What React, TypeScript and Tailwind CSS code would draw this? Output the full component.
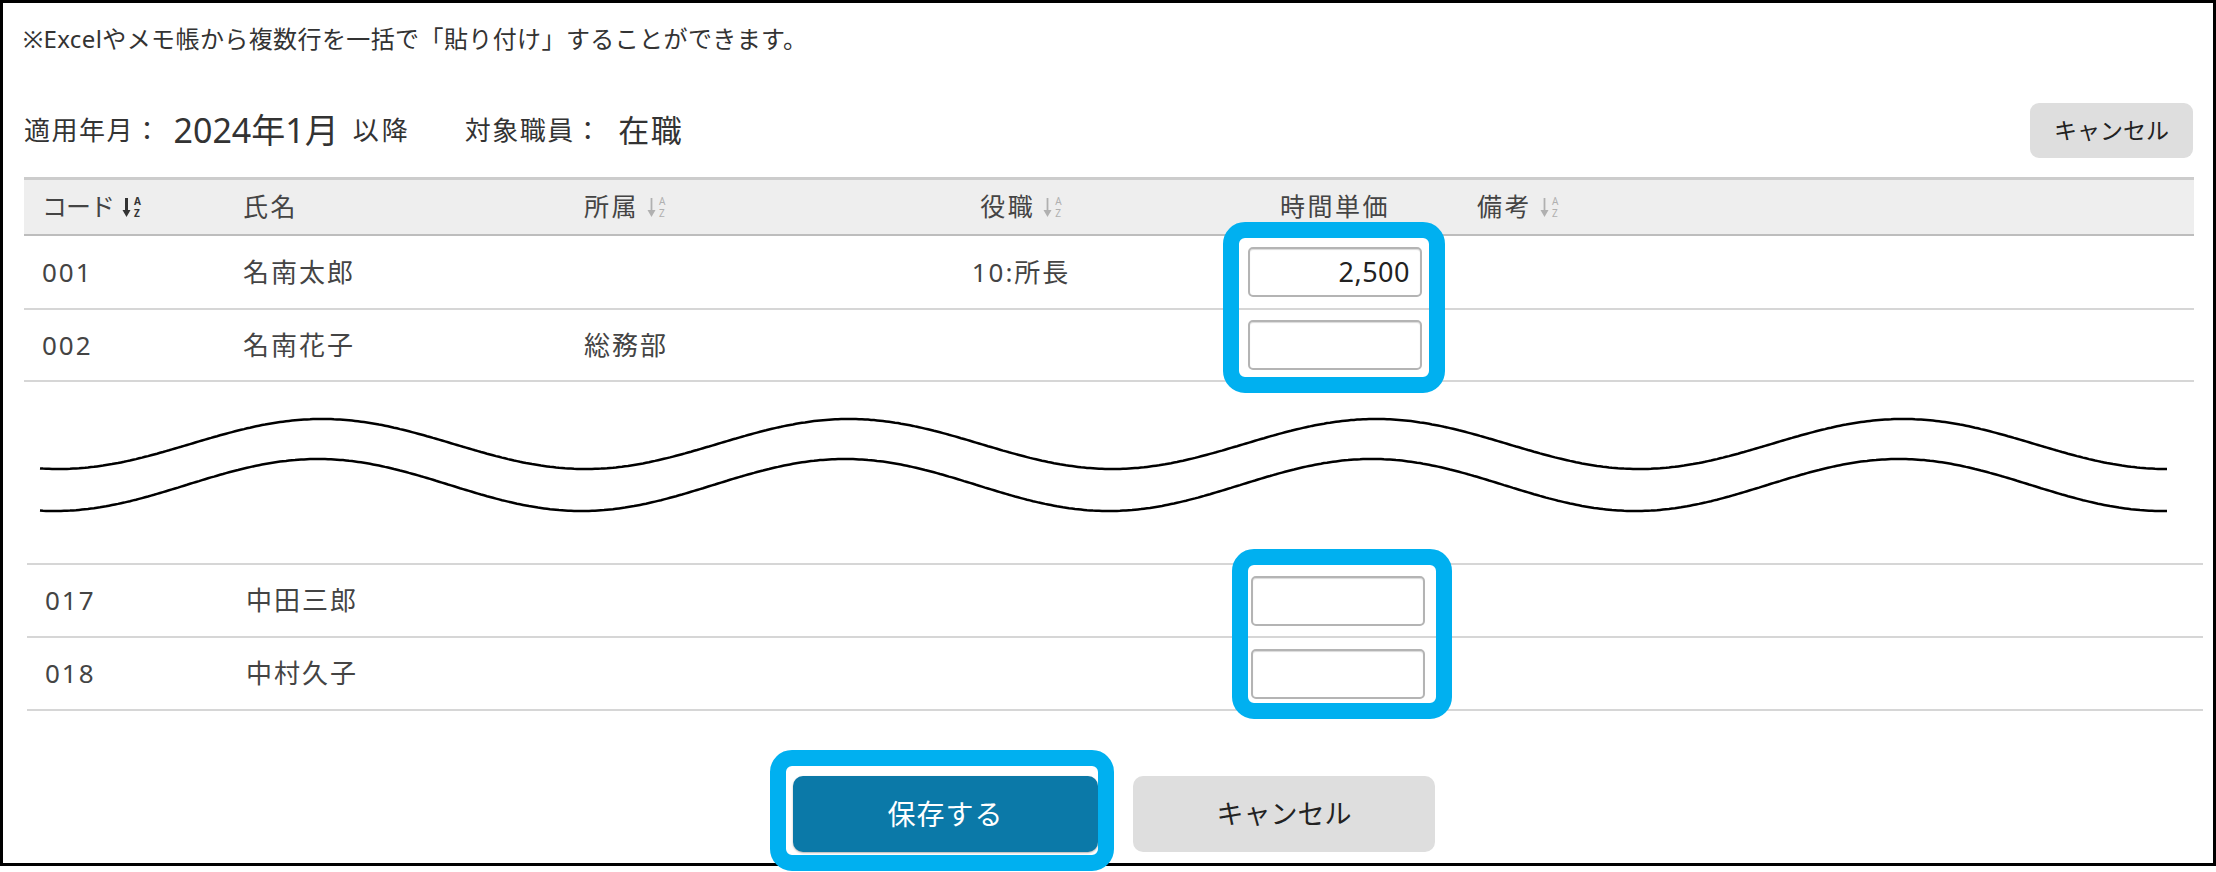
import React from 'react'

const FONT = "font-['Noto_Sans','Noto_Sans_CJK_JP',sans-serif]"

// sine-like break line between the two parts of the table
function wavePath(center: number, amp: number, peakX: number) {
  let d = ''
  for (let x = 40; x <= 2169; x += 3) {
    const y = center - amp * Math.cos((2 * Math.PI * (x - peakX)) / 527)
    d += (x === 40 ? 'M' : 'L') + x + ' ' + y.toFixed(1) + ' '
  }
  return d
}

function SortIcon({ active = false }: { active?: boolean }) {
  const color = active ? 'text-[#333333]' : 'text-[#b0b0b0]'
  return (
    <span className={`ml-[7px] inline-flex items-center tracking-normal ${color}`}>
      <svg width="11" height="24" viewBox="0 0 11 24" className="block">
        <line x1="5.5" y1="3" x2="5.5" y2="18" stroke="currentColor" strokeWidth={active ? 3 : 1.8} />
        <path d="M1.5 15 L5.5 22 L9.5 15 Z" fill="currentColor" />
      </svg>
      <span className={`ml-[2px] flex flex-col text-[10px] leading-[12px] ${active ? 'font-bold' : ''}`}>
        <span>A</span>
        <span>Z</span>
      </span>
    </span>
  )
}

function PriceInput({ value = '' }: { value?: string }) {
  return (
    <div className="flex h-[50px] w-[174px] items-center justify-end rounded-[5px] border-2 border-[#b4b4b4] bg-white pr-[10px] text-[27px] tracking-[0.5px] text-[#222222] shadow-[inset_0_1px_1px_rgba(0,0,0,0.15)]">
      {value}
    </div>
  )
}

interface Row {
  code: string
  name: string
  dept: string
  post: string
  price?: string
}

const topRows: Row[] = [
  { code: '001', name: '名南太郎', dept: '', post: '10:所長', price: '2,500' },
  { code: '002', name: '名南花子', dept: '総務部', post: '' },
]

const bottomRows: Row[] = [
  { code: '017', name: '中田三郎', dept: '', post: '' },
  { code: '018', name: '中村久子', dept: '', post: '' },
]

function TableRow({ row, height }: { row: Row; height: string }) {
  return (
    <div className={`flex items-center border-b-2 border-[#d6d6d6] text-[26px] tracking-[2px] text-[#444444] ${height}`}>
      <div className="w-[201px] pl-[18px]">{row.code}</div>
      <div className="w-[341px] pl-[18px]">{row.name}</div>
      <div className="w-[265px] pl-[18px]">{row.dept}</div>
      <div className="flex w-[380px] justify-center">{row.post}</div>
      <div className="flex w-[248px] justify-center">
        <PriceInput value={row.price} />
      </div>
      <div className="flex-1" />
    </div>
  )
}

export default function App() {
  return (
    <div className={`relative h-[872px] w-[2216px] bg-white ${FONT}`}>
      <div className="h-[866px] w-[2216px] border-[3px] border-black">
        <p className="pl-[20px] pt-[19px] text-[24px] leading-[34px] tracking-[0.4px] text-[#333333]">
          ※Excelやメモ帳から複数行を一括で「貼り付け」することができます。
        </p>

        <div className="mt-[47px] flex h-[55px] items-center pl-[21px] pr-[20px] text-[#333333]">
          <span className="text-[26px] tracking-[1.5px]">適用年月：</span>
          <span className="ml-[12px] text-[34px]">2024年1月</span>
          <span className="ml-[14px] text-[26px] tracking-[3px]">以降</span>
          <span className="ml-[54px] text-[26px] tracking-[1.5px]">対象職員：</span>
          <span className="ml-[16px] text-[31px] tracking-[1.5px]">在職</span>
          <button className="ml-auto flex h-[55px] w-[163px] items-center justify-center rounded-[9px] bg-[#dedede] text-[23px] text-[#222222]">
            キャンセル
          </button>
        </div>

        <div className="ml-[21px] mt-[19px] w-[2170px]">
          <div className="flex h-[59px] items-center border-b-2 border-t-[3px] border-b-[#bdbdbd] border-t-[#cccccc] bg-[#eeeeee] text-[25px] tracking-[2.5px] text-[#444444]">
            <div className="flex w-[201px] items-center pl-[18px]">
              <span className="tracking-[-1px]">コード</span>
              <SortIcon active />
            </div>
            <div className="w-[341px] pl-[18px]">氏名</div>
            <div className="flex w-[265px] items-center pl-[18px]">
              所属
              <SortIcon />
            </div>
            <div className="flex w-[380px] items-center justify-center">
              役職
              <SortIcon />
            </div>
            <div className="flex w-[248px] justify-center">時間単価</div>
            <div className="flex flex-1 items-center pl-[18px]">
              備考
              <SortIcon />
            </div>
          </div>
          <TableRow row={topRows[0]} height="h-[74px]" />
          <TableRow row={topRows[1]} height="h-[72px]" />
        </div>

        <svg width="2210" height="181" viewBox="3 382 2210 181" className="block">
          <path d={wavePath(444, 25, 322)} fill="none" stroke="#000" strokeWidth="2.5" />
          <path d={wavePath(485, 26, 318)} fill="none" stroke="#000" strokeWidth="2.5" />
        </svg>

        <div className="ml-[24px] w-[2176px] border-t-2 border-[#d6d6d6]">
          <TableRow row={bottomRows[0]} height="h-[73px]" />
          <TableRow row={bottomRows[1]} height="h-[73px]" />
        </div>

        <div className="mt-[65px] flex gap-[35px] pl-[790px]">
          <button className="flex h-[76px] w-[305px] items-center justify-center rounded-[10px] bg-[#0b79a8] text-[28px] tracking-[1px] text-white shadow-[0_1px_2px_rgba(0,0,0,0.3)]">
            保存する
          </button>
          <button className="flex h-[76px] w-[302px] items-center justify-center rounded-[10px] bg-[#dedede] text-[27px] text-[#222222]">
            キャンセル
          </button>
        </div>
      </div>

      {/* annotation highlights */}
      <div className="absolute left-[1223px] top-[222px] h-[171px] w-[222px] rounded-[22px] border-[16px] border-[#00b0f0]" />
      <div className="absolute left-[1232px] top-[549px] h-[170px] w-[220px] rounded-[22px] border-[16px] border-[#00b0f0]" />
      <div className="absolute left-[770px] top-[750px] h-[121px] w-[344px] rounded-[22px] border-[16px] border-[#00b0f0]" />
    </div>
  )
}
